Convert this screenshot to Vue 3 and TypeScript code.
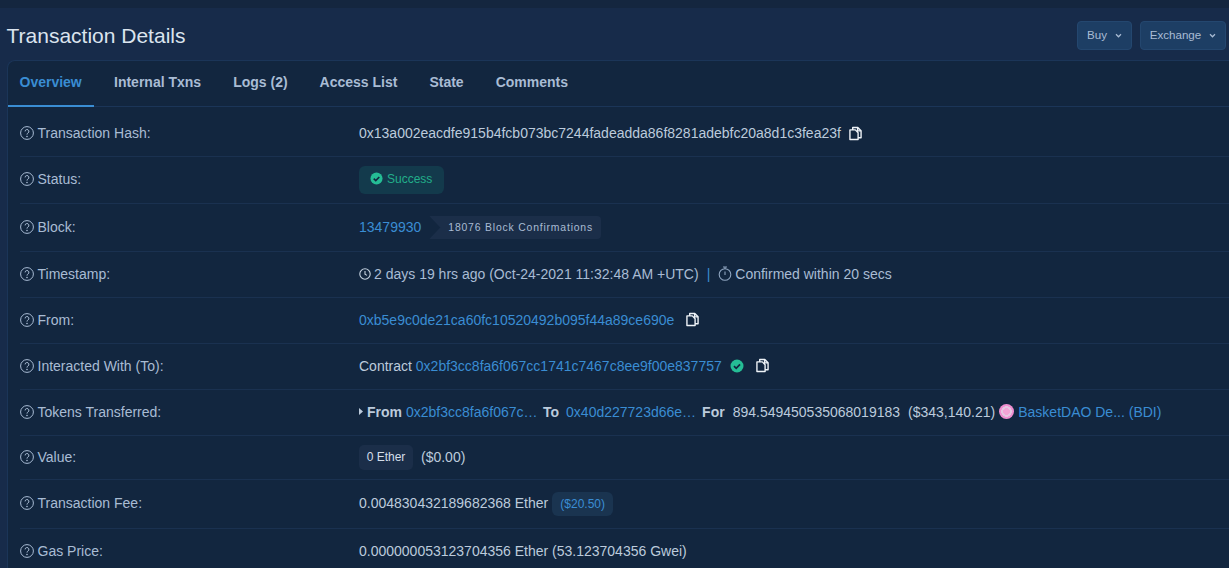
<script setup lang="ts">
const tabs = ['Overview', 'Internal Txns', 'Logs (2)', 'Access List', 'State', 'Comments']
</script>

<template>
  <div class="page">
    <div class="strip"></div>
    <header class="head">
      <h1>Transaction Details</h1>
      <div class="btns">
        <button class="btn buy"><span class="btxt">Buy</span><svg class="chev" viewBox="0 0 8 6"><path d="M1 1.5 4 4.5 7 1.5" /></svg></button>
        <button class="btn exch"><span class="btxt">Exchange</span><svg class="chev" viewBox="0 0 8 6"><path d="M1 1.5 4 4.5 7 1.5" /></svg></button>
      </div>
    </header>
    <section class="card">
      <nav class="tabs">
        <a v-for="(t, i) in tabs" :key="t" class="tab" :class="{ active: i === 0 }">{{ t }}</a>
      </nav>
      <div class="rows">
        <div class="row first">
          <div class="label"><svg class="q" viewBox="0 0 14 14"><circle cx="7" cy="7" r="6.4" /><path d="M5.1 5.4a1.9 1.9 0 1 1 2.8 1.7c-.6.3-.9.7-.9 1.5" /><circle class="dot" cx="7" cy="10.5" r=".8" /></svg>Transaction Hash:</div>
          <div class="val">0x13a002eacdfe915b4fcb073bc7244fadeadda86f8281adebfc20a8d1c3fea23f<svg class="copy c1" viewBox="0 0 14 15"><path d="M4 3.5V1h5.5L13 4.5V12h-3M9.3 1v3.7H13M1 3.6h5.8L9.8 6.6V14H1z" /></svg></div>
        </div>
        <div class="row h47">
          <div class="label"><svg class="q" viewBox="0 0 14 14"><circle cx="7" cy="7" r="6.4" /><path d="M5.1 5.4a1.9 1.9 0 1 1 2.8 1.7c-.6.3-.9.7-.9 1.5" /><circle class="dot" cx="7" cy="10.5" r=".8" /></svg>Status:</div>
          <div class="val"><span class="success"><svg class="ok small" viewBox="0 0 14 14"><circle cx="7" cy="7" r="6.5" /><path d="M4 7.2 6.2 9.3 10 5.3" /></svg>Success</span></div>
        </div>
        <div class="row h48">
          <div class="label"><svg class="q" viewBox="0 0 14 14"><circle cx="7" cy="7" r="6.4" /><path d="M5.1 5.4a1.9 1.9 0 1 1 2.8 1.7c-.6.3-.9.7-.9 1.5" /><circle class="dot" cx="7" cy="10.5" r=".8" /></svg>Block:</div>
          <div class="val"><a class="link">13479930</a><span class="confirm">18076 Block Confirmations</span></div>
        </div>
        <div class="row h46">
          <div class="label"><svg class="q" viewBox="0 0 14 14"><circle cx="7" cy="7" r="6.4" /><path d="M5.1 5.4a1.9 1.9 0 1 1 2.8 1.7c-.6.3-.9.7-.9 1.5" /><circle class="dot" cx="7" cy="10.5" r=".8" /></svg>Timestamp:</div>
          <div class="val"><svg class="clock" viewBox="0 0 12 12"><circle cx="6" cy="6" r="5.2" /><path d="M6 3v3.2l2 1.2" /></svg><span class="soft">2 days 19 hrs ago (Oct-24-2021 11:32:48 AM +UTC)</span><span class="pipe">|</span><svg class="timer" viewBox="0 0 14 15"><circle cx="7" cy="8.5" r="5.8" /><path d="M5 1h4M7 1v2M7 5.5v3.5" /></svg><span class="muted">Confirmed within 20 secs</span></div>
        </div>
        <div class="row h46">
          <div class="label"><svg class="q" viewBox="0 0 14 14"><circle cx="7" cy="7" r="6.4" /><path d="M5.1 5.4a1.9 1.9 0 1 1 2.8 1.7c-.6.3-.9.7-.9 1.5" /><circle class="dot" cx="7" cy="10.5" r=".8" /></svg>From:</div>
          <div class="val"><a class="link">0xb5e9c0de21ca60fc10520492b095f44a89ce690e</a><svg class="copy c2" viewBox="0 0 14 15"><path d="M4 3.5V1h5.5L13 4.5V12h-3M9.3 1v3.7H13M1 3.6h5.8L9.8 6.6V14H1z" /></svg></div>
        </div>
        <div class="row h46">
          <div class="label"><svg class="q" viewBox="0 0 14 14"><circle cx="7" cy="7" r="6.4" /><path d="M5.1 5.4a1.9 1.9 0 1 1 2.8 1.7c-.6.3-.9.7-.9 1.5" /><circle class="dot" cx="7" cy="10.5" r=".8" /></svg>Interacted With (To):</div>
          <div class="val">Contract&nbsp;<a class="link">0x2bf3cc8fa6f067cc1741c7467c8ee9f00e837757</a><svg class="ok big" viewBox="0 0 14 14"><circle cx="7" cy="7" r="6.5" /><path d="M4 7.2 6.2 9.3 10 5.3" /></svg><svg class="copy c3" viewBox="0 0 14 15"><path d="M4 3.5V1h5.5L13 4.5V12h-3M9.3 1v3.7H13M1 3.6h5.8L9.8 6.6V14H1z" /></svg></div>
        </div>
        <div class="row h46">
          <div class="label"><svg class="q" viewBox="0 0 14 14"><circle cx="7" cy="7" r="6.4" /><path d="M5.1 5.4a1.9 1.9 0 1 1 2.8 1.7c-.6.3-.9.7-.9 1.5" /><circle class="dot" cx="7" cy="10.5" r=".8" /></svg>Tokens Transferred:</div>
          <div class="val"><svg class="caret" viewBox="0 0 4 7"><path d="M0 0 4 3.5 0 7z" /></svg><b class="kw k1">From</b><a class="link trunc">0x2bf3cc8fa6f067c…</a><b class="kw k2">To</b><a class="link trunc">0x40d227723d66e…</a><b class="kw k3">For</b><span class="amt">894.549450535068019183</span><span class="usd">($343,140.21)</span><span class="coin"></span><a class="link">BasketDAO De... (BDI)</a></div>
        </div>
        <div class="row h44">
          <div class="label"><svg class="q" viewBox="0 0 14 14"><circle cx="7" cy="7" r="6.4" /><path d="M5.1 5.4a1.9 1.9 0 1 1 2.8 1.7c-.6.3-.9.7-.9 1.5" /><circle class="dot" cx="7" cy="10.5" r=".8" /></svg>Value:</div>
          <div class="val"><span class="ether">0 Ether</span><span class="usd0">($0.00)</span></div>
        </div>
        <div class="row h49">
          <div class="label"><svg class="q" viewBox="0 0 14 14"><circle cx="7" cy="7" r="6.4" /><path d="M5.1 5.4a1.9 1.9 0 1 1 2.8 1.7c-.6.3-.9.7-.9 1.5" /><circle class="dot" cx="7" cy="10.5" r=".8" /></svg>Transaction Fee:</div>
          <div class="val"><span>0.004830432189682368 Ether</span><span class="fee">($20.50)</span></div>
        </div>
        <div class="row h46 last">
          <div class="label"><svg class="q" viewBox="0 0 14 14"><circle cx="7" cy="7" r="6.4" /><path d="M5.1 5.4a1.9 1.9 0 1 1 2.8 1.7c-.6.3-.9.7-.9 1.5" /><circle class="dot" cx="7" cy="10.5" r=".8" /></svg>Gas Price:</div>
          <div class="val"><span>0.000000053123704356 Ether (53.123704356 Gwei)</span></div>
        </div>
      </div>
    </section>
  </div>
</template>

<style>
html, body { margin: 0; background: #172b4a; overflow: hidden; }
</style>

<style scoped>
.page { width: 1229px; height: 568px; overflow: hidden; background: #172b4a; font-family: "Liberation Sans", Arial, sans-serif; font-size: 14px; color: #a9bcd4; box-sizing: border-box; }
.strip { height: 8px; background: #14263f; }
.head { height: 52px; display: flex; justify-content: space-between; align-items: flex-start; padding: 0 3px 0 7px; }
h1 { margin: 15px 0 0 -0.5px; font-size: 21px; line-height: 26px; font-weight: 400; color: #dbe4ee; }
.btns { display: flex; gap: 8px; margin-top: 13px; }
.btn { height: 29px; padding: 0; background: #1d3e64; border: 1px solid #24476f; border-radius: 4px; color: #a9bcd4; font: 11.6px "Liberation Sans", Arial, sans-serif; display: flex; align-items: center; justify-content: center; gap: 8px; box-sizing: border-box; }
.btxt { position: relative; top: -1px; }
.buy { width: 55px; }
.exch { width: 86px; }
.chev { width: 7px; height: 5px; }
.chev path { fill: none; stroke: #a9bcd4; stroke-width: 1.5; }
.card { margin-left: 7px; width: 1260px; height: 520px; background: #12263f; border: 1px solid #1b3558; border-right: 0; border-radius: 8px 0 0 0; box-sizing: border-box; }
.tabs { display: flex; height: 45px; border-bottom: 1px solid #1b3558; }
.tab { padding: 0 12px; height: 45px; line-height: 42px; font-size: 14px; font-weight: 700; color: #a9bcd4; margin-right: 8px; box-sizing: border-box; }
.tab.active { color: #3a8dd3; border-bottom: 2px solid #3a8dd3; width: 86px; height: 46px; padding-left: 11.5px; }
.rows { padding-left: 12px; }
.row { display: flex; align-items: center; padding-bottom: 2px; border-bottom: 1px solid #1a3150; box-sizing: border-box; }
.row.first { height: 50px; padding: 3px 0 0; }
.row.last { border-bottom: 0; }
.h44 { height: 44px; } .h46 { height: 46px; } .h47 { height: 47px; } .h48 { height: 48px; } .h49 { height: 49px; }
.label { width: 339px; flex: none; display: flex; align-items: center; color: #a9bcd4; }
.q { width: 14px; height: 14px; margin-right: 3.5px; flex: none; }
.q circle, .q path { fill: none; stroke: #a9bcd4; stroke-width: 1; }
.q .dot { fill: #a9bcd4; stroke: none; }
.val { display: flex; align-items: center; color: #bccbdc; white-space: nowrap; }
.link { color: #3a8dd3; }
.copy { width: 13px; height: 15px; flex: none; }
.copy path { fill: none; stroke: #eef3f8; stroke-width: 1.5; stroke-linejoin: round; }
.c1 { margin-left: 8px; }
.c2 { margin-left: 12px; }
.c3 { margin-left: 12px; }
.success { height: 28px; width: 85px; padding: 0 0 2px 11px; margin-top: 1px; display: flex; align-items: center; background: #133a4c; border-radius: 6px; color: #22ae8a; font-size: 12px; box-sizing: border-box; }
.ok circle { fill: #25bd95; }
.ok path { fill: none; stroke: #12263f; stroke-width: 1.7; }
.ok.small { width: 13px; height: 13px; margin-right: 4px; }
.ok.big { width: 14px; height: 14px; margin-left: 8px; }
.confirm { margin-left: 8px; margin-top: 2px; height: 23px; width: 172px; display: flex; align-items: center; padding-left: 19px; box-sizing: border-box; background: #1b2e49; color: #a9bcd4; font-size: 10.4px; letter-spacing: 0.82px; border-radius: 0 4px 4px 0; clip-path: polygon(0 0, 100% 0, 100% 100%, 0 100%, 11px 50%); }
.clock { width: 12px; height: 12px; margin-right: 3px; flex: none; }
.clock circle, .clock path { fill: none; stroke: #c6d3e1; stroke-width: 1.1; }
.soft { color: #a9bcd4; }
.pipe { margin: 0 8px 0 8px; color: #3a8dd3; }
.timer { width: 14px; height: 15px; margin-right: 3px; flex: none; }
.timer circle, .timer path { fill: none; stroke: #8ea4bf; stroke-width: 1.1; }
.muted { color: #a9bcd4; }
.caret { width: 4px; height: 7px; margin-right: 4px; }
.caret path { fill: #bccbdc; }
.kw { color: #bccbdc; }
.k1 { margin-right: 4px; }
.trunc { width: 130px; }
.k2 { margin: 0 7px 0 7px; }
.k3 { margin: 0 8px 0 6px; }
.amt { margin-right: 8px; }
.usd { margin-right: 4px; }
.coin { width: 15px; height: 15px; margin-right: 4px; border-radius: 50%; background: radial-gradient(circle, #f3a4d6 0 30%, #e7c6e2 32% 48%, #f08fd0 52%); flex: none; }
.ether { height: 25px; width: 54px; display: flex; align-items: center; justify-content: center; background: #1b2e49; border-radius: 5px; color: #d4deea; font-size: 12px; margin-top: 1px; }
.usd0 { margin-left: 8px; }
.fee { margin-left: 4px; margin-top: 1px; height: 24px; width: 61px; display: flex; align-items: center; justify-content: center; background: #1a3450; border-radius: 6px; color: #3a8dd3; font-size: 12px; }
</style>
